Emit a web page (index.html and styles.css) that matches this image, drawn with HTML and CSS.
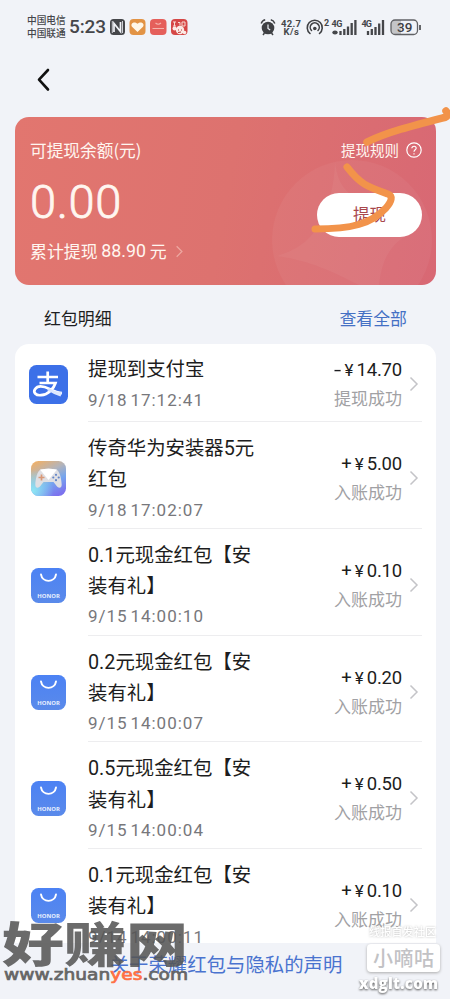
FILE: index.html
```html
<!DOCTYPE html>
<html lang="zh-CN">
<head>
<meta charset="utf-8">
<title>红包</title>
<link rel="stylesheet" href="styles.css">
</head>
<body>
<svg class="defs" width="0" height="0">
  <defs>
    <linearGradient id="gBlue" x1="0" y1="0" x2="0" y2="1"><stop offset="0" stop-color="#4c82f4"/><stop offset="1" stop-color="#5a8aea"/></linearGradient>
    <linearGradient id="gGame" x1="0.2" y1="0" x2="0.7" y2="1"><stop offset="0" stop-color="#ecb06c"/><stop offset=".35" stop-color="#b5b4b8"/><stop offset=".65" stop-color="#75a5ee"/><stop offset="1" stop-color="#7c72ee"/></linearGradient>
    <radialGradient id="gCyan" cx="0.05" cy="0.85" r="0.6"><stop offset="0" stop-color="#8ee6f4"/><stop offset="1" stop-color="#8ee6f4" stop-opacity="0"/></radialGradient>
    <symbol id="bag" viewBox="0 0 35 35">
      <rect width="35" height="35" rx="7.500" fill="url(#gBlue)"/>
      <path d="M10 6.500a7.600 7.600 0 0 0 15 0" fill="none" stroke="#fff" stroke-width="1.900" stroke-linecap="round"/>
      <text x="6.300" y="29.700" textLength="22.500" lengthAdjust="spacingAndGlyphs" class="honor">HONOR</text>
    </symbol>
    <symbol id="chev" viewBox="0 0 10 16"><path d="M1.500 1.500 8 8l-6.500 6.500" fill="none" stroke="currentColor" stroke-width="1.500"/></symbol>
  </defs>
</svg>

<header class="status">
  <div class="carriers"><span>中国电信</span><span>中国联通</span></div>
  <div class="clock">5:23</div>
  <svg class="s-left" width="80" height="18" viewBox="0 0 80 18">
    <rect x="1" y="1" width="15" height="16" rx="3.500" fill="#45464a"/>
    <path d="M5 14V5.500l6.500 8V4" fill="none" stroke="#f1f3f8" stroke-width="1.700"/>
    <path d="M3.300 15V3M13.500 3v12" stroke="#f1f3f8" stroke-width=".8"/>
    <rect x="20.500" y="1" width="16" height="16" rx="4" fill="#e29345"/>
    <path d="M28.500 14l-5.500-5.200c-2-2.500 1.500-6.200 5.500-3 4-3.200 7.500.5 5.500 3z" fill="#fff7e8"/>
    <rect x="41" y="1" width="16.500" height="16" rx="4" fill="#e55f5b"/>
    <path d="M46.500 5q2.700 2.400 5.500 0M43.500 10.500h11.500" fill="none" stroke="#f5b3ad" stroke-width="1.100"/>
    <rect x="62" y="1" width="16.500" height="16" rx="4" fill="#d54746"/>
    <path d="M64 4h3M65.500 4v4M64 8h3M69 4.500h2v3M73 4h3v4h-3z" fill="none" stroke="#f8dcd2"/>
    <circle cx="71" cy="12" r="4.200" fill="#fbeae5"/><circle cx="65.500" cy="10.500" r="2" fill="#fbeae5"/><circle cx="75.500" cy="14.500" r="1.800" fill="#fbeae5"/>
    <path d="M69 12h1M72 12h1M69 14.500l3-.5" stroke="#b33"/>
  </svg>
  <svg class="s-right" width="164" height="22" viewBox="260 16 164 22">
    <circle cx="268" cy="28" r="6.300" fill="#3f4044"/><path d="M261.200 23.500q1-3 4-3.700M274.800 23.500q-1-3-4-3.700M263 35l1.500-2M273 35l-1.500-2" fill="none" stroke="#3f4044" stroke-width="1.500"/>
    <path d="M268 24.500v4l2.200 1.500" fill="none" stroke="#f1f3f8" stroke-width="1.200"/>
    <text x="281" y="27" textLength="20" class="tiny">42.7</text><text x="283.500" y="35" textLength="15.500" class="tiny">K/s</text>
    <g fill="none" stroke="#3f4044" stroke-width="1.600" stroke-linecap="round">
      <path d="M310 33.500a7.500 7.500 0 1 1 9.500 0M311.500 30.500a4.500 4.500 0 1 1 6.500 0"/></g>
    <circle cx="314.800" cy="28.500" r="1.800" fill="#3f4044"/>
    <text x="324" y="25.500" class="tiny small">2</text>
    <text x="331.500" y="27" textLength="11" class="tiny small">4G</text><text x="361.500" y="27" textLength="10.500" class="tiny small">4G</text>
    <g stroke="#45464a" stroke-width="2.300"><path d="M340.500 35v-4M344.300 35v-6M348 35v-8.500M351.700 35v-12M355.400 35v-15M368 35v-4M371.800 35v-6M375.500 35v-8M379.200 35v-11.500M383 35v-15"/></g>
    <ellipse cx="335" cy="32.500" rx="2.700" ry="2" fill="#45464a"/>
    <path d="M395 20h6v14.500h-6a4 4 0 0 1-4-4V24a4 4 0 0 1 4-4z" fill="#c4c5c8"/>
    <rect x="391" y="20" width="26.500" height="14.500" rx="4" fill="none" stroke="#606165" stroke-width="1.300"/>
    <path d="M420 25v5" stroke="#55565a" stroke-width="1.800"/>
    <text x="397" y="32" textLength="15.500" class="batt">39</text>
  </svg>
</header>

<nav class="nav"><svg width="14" height="24" viewBox="0 0 14 24"><path d="M12 2 3 11.700 12 21.500" fill="none" stroke="#111" stroke-width="2.600" stroke-linecap="round" stroke-linejoin="round"/></svg></nav>

<section class="card">
  <svg class="card-bg" width="421" height="168" viewBox="15 117 421 168">
    <circle cx="352" cy="240" r="80" fill="#fff" fill-opacity=".045"/>
    <path d="M335 162c3 22 10 32 30 40l47 30c-22 12-30 27-33 53h-20c-28-14-48-24-82-29 24-7 38-20 46-40 8-18 11-32 12-54z" fill="#fff" fill-opacity=".045"/>
  </svg>
  <div class="card-left">
    <div class="label">可提现余额(元)</div>
    <div class="balance">0.00</div>
    <div class="total">累计提现 <span class="n">88.90</span> 元<svg width="9" height="13"><use href="#chev"/></svg></div>
  </div>
  <div class="card-right">
    <div class="rules">提现规则<svg width="16" height="16" viewBox="0 0 16 16"><circle cx="8" cy="8" r="7.200" fill="none" stroke="#fff" stroke-width="1.200"/><path d="M5.800 6.300c.2-3 4.800-2.500 4.300.2C9.900 7.800 8 7.900 8 9.800M8 11.200v1.200" fill="none" stroke="#fff" stroke-width="1.200"/></svg></div>
    <div class="btn">提现</div>
  </div>
</section>

<div class="head"><span>红包明细</span><a>查看全部</a></div>

<main class="list">
  <article class="row first">
    <svg class="ico pay" width="39" height="39" viewBox="0 0 39 39"><rect width="39" height="39" rx="7.500" fill="#3c70e8"/><path d="M8.500 12h20.500M18.700 6.500v12M10.500 18h16c-1.700 5.500-7 11.500-14.500 12.200-5.500.5-8-3-6-6 2.700-4 9-3 14.500-.3 4 2 8 4 12.500 4.300" fill="none" stroke="#fff" stroke-width="2.700"/><path d="M20 23q6 4 13 4l-1.500 4.500Q24 29 18 25z" fill="#dce8ff"/></svg>
    <div class="body"><div class="info"><h3>提现到支付宝</h3><time>9/18 17:12:41</time></div>
    <div class="amt"><b><i>-</i><u>¥</u><em>14.70</em></b><span>提现成功</span></div><svg class="go" width="10" height="16"><use href="#chev"/></svg></div>
  </article>
  <article class="row">
    <svg class="ico" width="35" height="35" viewBox="0 0 35 35"><rect width="35" height="35" rx="7.500" fill="url(#gGame)"/><rect width="35" height="35" rx="7.500" fill="url(#gCyan)"/><path d="M9 9q8.500-3 17 0c2.500 1 4.500 9 4.700 14.500 0 4-3.500 4.500-6 .2L22.500 21h-10l-2.200 2.700c-2.500 4.300-6 3.800-6-.2C4.500 18 6.500 10 9 9z" fill="#dfdfe3"/><path d="M9 8.500q8.500-1.500 17 0L17.500 19z" fill="#fff"/><path d="M10.500 13.500v6M7.500 16.500h6" stroke="#d99876" stroke-width="1.700"/><g fill="#6285c8"><circle cx="25" cy="13.800" r="1.100"/><circle cx="25" cy="19.200" r="1.100"/><circle cx="22.300" cy="16.500" r="1.100"/><circle cx="27.700" cy="16.500" r="1.100"/></g></svg>
    <div class="body"><div class="info"><h3>传奇华为安装器<span class="n">5</span>元<br>红包</h3><time>9/18 17:02:07</time></div>
    <div class="amt"><b><i>+</i><u>¥</u><em>5.00</em></b><span>入账成功</span></div><svg class="go" width="10" height="16"><use href="#chev"/></svg></div>
  </article>
  <article class="row">
    <svg class="ico" width="35" height="35"><use href="#bag"/></svg>
    <div class="body"><div class="info"><h3><span class="n">0.1</span>元现金红包【安<br>装有礼】</h3><time>9/15 14:00:10</time></div>
    <div class="amt"><b><i>+</i><u>¥</u><em>0.10</em></b><span>入账成功</span></div><svg class="go" width="10" height="16"><use href="#chev"/></svg></div>
  </article>
  <article class="row">
    <svg class="ico" width="35" height="35"><use href="#bag"/></svg>
    <div class="body"><div class="info"><h3><span class="n">0.2</span>元现金红包【安<br>装有礼】</h3><time>9/15 14:00:07</time></div>
    <div class="amt"><b><i>+</i><u>¥</u><em>0.20</em></b><span>入账成功</span></div><svg class="go" width="10" height="16"><use href="#chev"/></svg></div>
  </article>
  <article class="row">
    <svg class="ico" width="35" height="35"><use href="#bag"/></svg>
    <div class="body"><div class="info"><h3><span class="n">0.5</span>元现金红包【安<br>装有礼】</h3><time>9/15 14:00:04</time></div>
    <div class="amt"><b><i>+</i><u>¥</u><em>0.50</em></b><span>入账成功</span></div><svg class="go" width="10" height="16"><use href="#chev"/></svg></div>
  </article>
  <article class="row">
    <svg class="ico" width="35" height="35"><use href="#bag"/></svg>
    <div class="body"><div class="info"><h3><span class="n">0.1</span>元现金红包【安<br>装有礼】</h3><time>9/14 14:00:11</time></div>
    <div class="amt"><b><i>+</i><u>¥</u><em>0.10</em></b><span>入账成功</span></div><svg class="go" width="10" height="16"><use href="#chev"/></svg></div>
  </article>
</main>

<footer class="foot">关于荣耀红包与隐私的声明</footer>

<svg class="overlay" width="450" height="999" viewBox="0 0 450 999">
  <g fill="none" stroke="#f2934a" stroke-width="8" stroke-linecap="round" stroke-linejoin="round">
    <path d="M367 142c20-10 48-17 79-25q3-2 0-6" stroke-width="7.500"/>
    <path d="M347 167c14 18 21 20 41 27 5 2 4 7-2 14-15 16-34 21-71 21" stroke-width="7"/>
  </g>
  <text x="2" y="962" textLength="186" lengthAdjust="spacingAndGlyphs" class="wm-big">好赚网</text>
  <text x="4" y="979.500" textLength="184" lengthAdjust="spacingAndGlyphs" class="wm-url">www.zhuan<tspan fill="#ff7044" stroke="#ff7044">yes</tspan>.com</text>
  <text x="369" y="936" textLength="67" class="wm-sm">线报首发社区</text>
  <rect x="367" y="944" width="73" height="28" rx="4" class="wm-box"/>
  <text x="373" y="965.500" textLength="61" class="wm-name">小嘀咕</text>
  <text x="359" y="989" textLength="79" class="wm-dom">xdglt.com</text>
</svg>
</body>
</html>
```
FILE: styles.css
```css
* { box-sizing: border-box; margin: 0; padding: 0; }
body {
  position: relative;
  width: 450px;
  height: 999px;
  overflow: hidden;
  display: flex;
  flex-direction: column;
  background: #f1f3f8;
  color: #1d1d20;
  font-family: "Noto Sans CJK SC", sans-serif;
}
svg { display: block; flex: none; }
.defs { position: absolute; }
.n, time, .amt b, .clock { font-family: Roboto, "Noto Sans CJK SC", sans-serif; }
.n { line-height: 1; }
.honor { font: 700 5.800px "Open Sans", sans-serif; fill: #e8f0ff; }

.status { height: 54px; display: flex; align-items: center; padding-left: 27px; color: #45464a; }
.carriers { display: flex; flex-direction: column; width: 42px; font-size: 9.700px; line-height: 13.300px; font-weight: 500; white-space: nowrap; }
.clock { width: 39px; font-size: 19px; line-height: 22px; font-weight: 500; letter-spacing: -.1px; }
.s-left { margin-left: 1px; }
.s-right { margin-left: 71px; }
.tiny { font: 700 9.500px Roboto, sans-serif; fill: #45464a; }
.small { font-size: 9px; }
.batt { font: 500 13.500px Roboto, sans-serif; fill: #3f4044; }

.nav { height: 63px; padding: 14px 0 0 36px; }

.card {
  position: relative;
  height: 168px;
  margin: 0 14px 0 15px;
  border-radius: 14px;
  overflow: hidden;
  display: flex;
  justify-content: space-between;
  padding: 0 14px 0 15px;
  color: #fff6f0;
  background: linear-gradient(100deg, #e2766f 0%, #dd726f 50%, #d86874 100%);
}
.card-bg { position: absolute; left: 0; top: 0; }
.card-left, .card-right { position: relative; display: flex; flex-direction: column; }
.label { padding-top: 21px; font-size: 16.700px; line-height: 24px; }
.balance { font: 300 47px/50px Roboto, sans-serif; margin-top: 15px; letter-spacing: .6px; -webkit-text-stroke: .8px #fff6f0; }
.total { display: flex; align-items: center; margin-top: 12px; font-size: 16.900px; line-height: 24px; white-space: pre; }
.total .n { font-size: 17.800px; }
.total svg { margin-left: 8px; color: #eda8a1; }
.card-right { align-items: flex-end; }
.rules { display: flex; align-items: center; gap: 7px; padding-top: 21px; font-size: 14.500px; line-height: 24px; }
.btn { width: 105px; height: 44px; margin-top: 31px; border-radius: 22px; background: #fff; color: #a8474c; text-align: center; font-size: 16.500px; line-height: 43px; }

.head { height: 59px; padding: 20px 43px 0 44px; display: flex; justify-content: space-between; font-size: 16.900px; line-height: 25px; }
.head a { color: #4470c4; }

.list { height: 599px; margin: 0 14px 0 15px; border-radius: 14px 14px 0 0; overflow: hidden; background: #fff; }
.row { height: 106.800px; display: flex; padding: 0 14px 0 16px; }
.row.first { height: 78px; padding-left: 14px; }
.ico { margin-top: 39px; }
.pay { margin-top: 21px; }
.body { flex: 1; display: flex; margin-left: 22px; border-bottom: 1px solid #ededef; }
.first .body { margin-left: 20px; }
.info { flex: 1; padding-top: 9px; }
h3 { font-size: 19.400px; line-height: 31.300px; font-weight: 400; white-space: nowrap; }
h3 .n { font-size: 19.800px; }
time { display: block; font-size: 17px; line-height: 32px; letter-spacing: 1px; word-spacing: -2.500px; color: #77777b; }
.amt { display: flex; flex-direction: column; align-items: flex-end; padding-top: 30px; }
.amt b { display: flex; font-size: 18.500px; line-height: 25px; font-weight: 400; gap: 3px; }
.amt i, .amt em { font-style: normal; }
.amt u { text-decoration: none; font-size: 17px; }
.amt em { letter-spacing: -.2px; }
.amt span { font-size: 17px; line-height: 29px; color: #a1a1a4; }
.go { margin: 48px 3px 0 7px; color: #c4c4c8; }
.first .info { padding-top: 8px; }
.first time { line-height: 34px; }
.first .amt { padding-top: 14px; }
.first .go { margin-top: 32px; }
.first i { transform: scaleX(1.4); transform-origin: right; }

.foot { height: 56px; padding-left: 2px; text-align: center; font-size: 19.400px; line-height: 42px; color: #4a73cf; }

.overlay { position: absolute; left: 0; top: 0; }
.wm-big { font: 900 48px "Noto Sans CJK SC", sans-serif; fill: #555; fill-opacity: .87; }
.wm-url { font: 400 15.500px "DejaVu Sans", sans-serif; fill: #666; stroke: #666; stroke-width: .7px; }
.wm-sm { font: 500 11px "Noto Sans CJK SC", sans-serif; fill: #fff; filter: drop-shadow(0 0 1px #bbb); }
.wm-box { fill: #fff; filter: drop-shadow(0 1px 1.500px #aaa); }
.wm-name { font: 500 20px "Noto Sans CJK SC", sans-serif; fill: #c2c2c5; }
.wm-dom { font: 800 15px "Open Sans", sans-serif; fill: #fff; filter: drop-shadow(0 1px 1px #555); }
```
